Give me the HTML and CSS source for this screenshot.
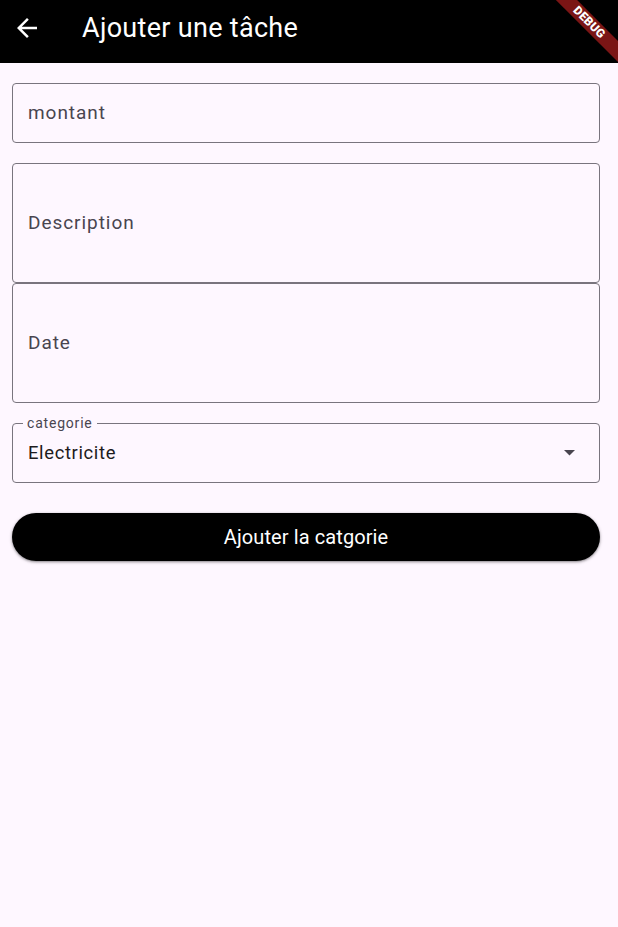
FILE: index.html
```html
<!DOCTYPE html>
<html lang="fr">
<head>
<meta charset="utf-8">
<title>Ajouter une tâche</title>
<link rel="stylesheet" href="styles.css">
</head>
<body>
<header class="appbar">
  <button class="back" aria-label="Retour">
    <svg viewBox="0 0 24 24" width="30" height="30"><path fill="#fff" d="M20 11H7.830l5.590-5.590L12 4l-8 8 8 8 1.410-1.410L7.830 13H20v-2z"/></svg>
  </button>
  <h1 class="title">Ajouter une tâche</h1>
  <div class="debug"><span>DEBUG</span></div>
</header>
<main class="form">
  <div class="field field-short"><span class="placeholder">montant</span></div>
  <div class="field field-tall field-joined"><span class="placeholder">Description</span></div>
  <div class="field field-tall"><span class="placeholder">Date</span></div>
  <div class="field field-short dropdown">
    <span class="floating">categorie</span>
    <span class="value">Electricite</span>
    <svg class="caret" viewBox="0 0 10 5" width="11" height="5.5"><path d="M0 0h10L5 5z" fill="#49454f"/></svg>
  </div>
  <button class="submit">Ajouter la catgorie</button>
</main>
</body>
</html>
```
FILE: styles.css
```css
html, body {
  margin: 0;
  padding: 0;
}
body {
  background: #fef7ff;
  font-family: Roboto, "Noto Sans", sans-serif;
  width: 618px;
  min-height: 927px;
  overflow: hidden;
}
.appbar {
  position: relative;
  height: 63px;
  background: #000;
  display: flex;
  align-items: center;
  overflow: hidden;
}
.back {
  width: 30px;
  height: 30px;
  margin-left: 12px;
  margin-top: -8px;
  padding: 0;
  border: 0;
  background: transparent;
  display: flex;
}
.title {
  margin: 0 0 0 40px;
  margin-top: -8px;
  color: #fff;
  font-size: 27px;
  font-weight: 400;
  line-height: 32px;
  letter-spacing: 0.3px;
}
.debug {
  position: absolute;
  left: 529px;
  top: 15px;
  width: 120px;
  height: 15px;
  background: #7a1515;
  transform: rotate(45deg);
  display: flex;
  align-items: center;
  justify-content: center;
}
.debug span {
  color: #fff;
  font-size: 12px;
  font-weight: 900;
  line-height: 15px;
  letter-spacing: 0.2px;
}
.form {
  padding: 20px 18px 20px 12px;
  display: flex;
  flex-direction: column;
}
.field {
  box-sizing: border-box;
  border: 1px solid #79747e;
  border-radius: 4px;
  display: flex;
  align-items: center;
  padding: 0 15px;
  margin-bottom: 20px;
  position: relative;
}
.field-short { height: 60px; }
.field-tall { height: 120px; }
.field-joined { margin-bottom: 0; }
.placeholder {
  font-size: 19px;
  letter-spacing: 0.95px;
  color: #49454f;
  margin-top: -2px;
}
.dropdown {
  justify-content: space-between;
  padding-right: 24px;
  margin-bottom: 30px;
}
.floating {
  position: absolute;
  left: 10px;
  top: -9px;
  padding: 0 4px;
  background: #fef7ff;
  font-size: 14px;
  line-height: 16px;
  letter-spacing: 0.8px;
  color: #49454f;
}
.value {
  font-size: 18.4px;
  color: #1d1b20;
  letter-spacing: 0.65px;
  margin-top: -2px;
}
.caret { display: block; }
.submit {
  height: 48px;
  border: 0;
  border-radius: 24px;
  background: #000;
  color: #fff;
  font-family: Roboto, sans-serif;
  font-size: 20px;
  font-weight: 400;
  letter-spacing: 0.1px;
  box-shadow: 0 1px 2px rgba(0,0,0,0.3), 0 1px 3px 1px rgba(0,0,0,0.15);
}
```
